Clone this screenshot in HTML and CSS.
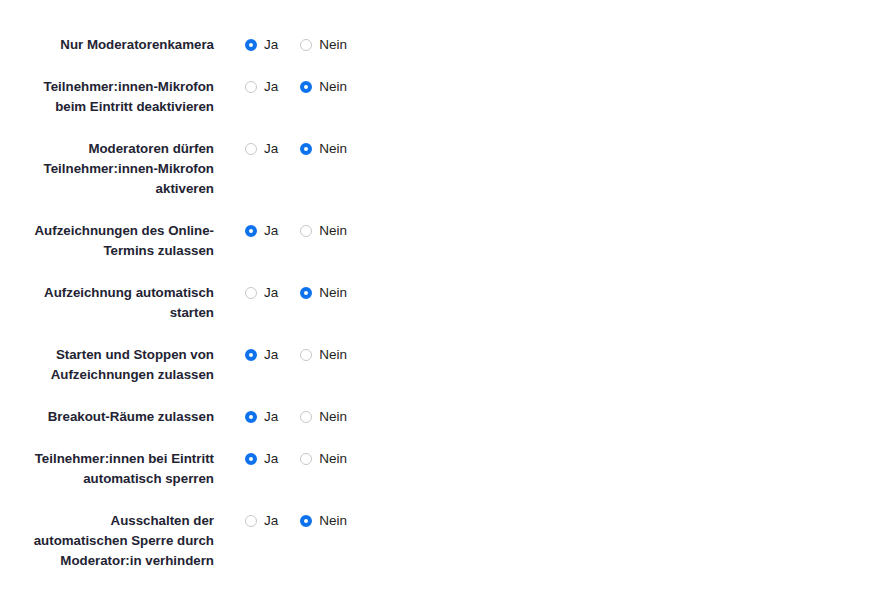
FILE: index.html
```html
<!DOCTYPE html>
<html lang="de">
<head>
<meta charset="utf-8">
<link rel="stylesheet" href="styles.css">
</head>
<body>
<div class="settings">
  <div class="row"><div class="label">Nur Moderatorenkamera</div><div class="opts"><span class="opt"><span class="radio on"></span>Ja</span><span class="opt"><span class="radio"></span>Nein</span></div></div>
  <div class="row"><div class="label">Teilnehmer:innen-Mikrofon beim Eintritt deaktivieren</div><div class="opts"><span class="opt"><span class="radio"></span>Ja</span><span class="opt"><span class="radio on"></span>Nein</span></div></div>
  <div class="row"><div class="label">Moderatoren dürfen Teilnehmer:innen-Mikrofon aktiveren</div><div class="opts"><span class="opt"><span class="radio"></span>Ja</span><span class="opt"><span class="radio on"></span>Nein</span></div></div>
  <div class="row"><div class="label">Aufzeichnungen des Online-Termins zulassen</div><div class="opts"><span class="opt"><span class="radio on"></span>Ja</span><span class="opt"><span class="radio"></span>Nein</span></div></div>
  <div class="row"><div class="label">Aufzeichnung automatisch starten</div><div class="opts"><span class="opt"><span class="radio"></span>Ja</span><span class="opt"><span class="radio on"></span>Nein</span></div></div>
  <div class="row"><div class="label">Starten und Stoppen von Aufzeichnungen zulassen</div><div class="opts"><span class="opt"><span class="radio on"></span>Ja</span><span class="opt"><span class="radio"></span>Nein</span></div></div>
  <div class="row"><div class="label">Breakout-Räume zulassen</div><div class="opts"><span class="opt"><span class="radio on"></span>Ja</span><span class="opt"><span class="radio"></span>Nein</span></div></div>
  <div class="row"><div class="label">Teilnehmer:innen bei Eintritt automatisch sperren</div><div class="opts"><span class="opt"><span class="radio on"></span>Ja</span><span class="opt"><span class="radio"></span>Nein</span></div></div>
  <div class="row"><div class="label">Ausschalten der automatischen Sperre durch Moderator:in verhindern</div><div class="opts"><span class="opt"><span class="radio"></span>Ja</span><span class="opt"><span class="radio on"></span>Nein</span></div></div>
</div>
</body>
</html>
```
FILE: styles.css
```css
html, body {
  margin: 0;
  padding: 0;
  background: #fff;
}
body {
  font-family: "Liberation Sans", Arial, sans-serif;
  color: #232333;
}
.settings {
  display: flex;
  flex-direction: column;
  gap: 22px;
  padding: 35px 0 0 0;
}
.row {
  display: flex;
  align-items: flex-start;
}
.label {
  width: 184px;
  margin-left: 30px;
  text-align: right;
  font-size: 13.3px;
  font-weight: bold;
  line-height: 20px;
}
.opts {
  display: flex;
  margin-left: 31px;
  gap: 22px;
  line-height: 20px;
  font-size: 13.5px;
  color: #1f1f24;
}
.opt {
  display: flex;
  align-items: center;
  height: 20px;
}
.radio {
  box-sizing: border-box;
  width: 12px;
  height: 12px;
  border-radius: 50%;
  border: 1px solid #c8c8cc;
  background: #fff;
  margin-right: 7px;
}
.radio.on {
  border: 4px solid #0e72ed;
  background: #fff;
}
```
